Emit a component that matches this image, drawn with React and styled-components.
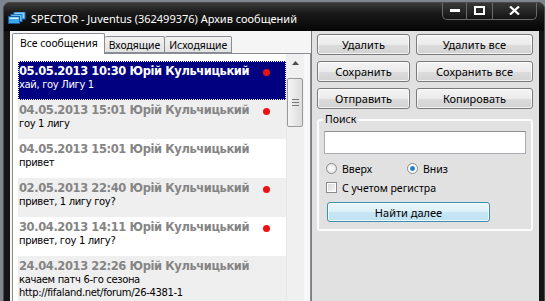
import React from "react";
import styled, { createGlobalStyle } from "styled-components";

const Global = createGlobalStyle`
  html, body { margin: 0; padding: 0; background: #7d858e; }
  body { width: 545px; height: 301px; overflow: hidden; }
`;

const Window = styled.div`
  margin: 2px 0 0 3px;
  width: 542px;
  height: 299px;
  background: #151515;
  border-radius: 7px 7px 0 0;
  border: 1px solid #4a4a4a;
  border-bottom: none;
  box-sizing: border-box;
  display: flex;
  flex-direction: column;
  overflow: hidden;
`;

const TitleBar = styled.div`
  height: 28px;
  flex: none;
  display: flex;
  align-items: flex-start;
  background: linear-gradient(#3c3c3c 0%, #1a1a1a 35%, #050505 100%);
`;

const AppIcon = styled.svg`
  margin: 9px 0 0 4px;
  flex: none;
`;

const Title = styled.div`
  margin: 9px 0 0 5px;
  font-family: "Noto Sans", sans-serif;
  font-size: 11px;
  line-height: 14px;
  color: #ffffff;
  white-space: nowrap;
`;

const Controls = styled.div`
  margin-left: auto;
  margin-right: 7px;
  margin-top: -1px;
  display: flex;
  border: 1px solid #6a6a6a;
  border-top: none;
  border-radius: 0 0 5px 5px;
  overflow: hidden;
  background: linear-gradient(#3a3a3a, #141414);
`;

const CtlButton = styled.div`
  width: ${(p) => p.$w}px;
  height: 17px;
  display: flex;
  align-items: center;
  justify-content: center;
  border-left: ${(p) => (p.$first ? "none" : "1px solid #6a6a6a")};
`;

const Client = styled.div`
  flex: 1;
  display: flex;
  margin: 0 5px 0 6px;
  background: #f5f5f5;
  min-height: 0;
`;

const LeftPane = styled.div`
  width: 301px;
  flex: none;
  display: flex;
  flex-direction: column;
  padding: 2px 0 0 2px;
  box-sizing: border-box;
`;

const TabRow = styled.div`
  display: flex;
  align-items: flex-end;
  height: 20px;
  flex: none;
  position: relative;
  z-index: 1;
`;

const Tab = styled.div`
  font-family: "Noto Sans", sans-serif;
  font-size: 10.4px;
  color: #000;
  box-sizing: border-box;
  height: ${(p) => (p.$active ? "21px" : "17px")};
  margin-bottom: ${(p) => (p.$active ? "-1px" : "0")};
  padding: ${(p) => (p.$active ? "2px 6px 0 7px" : "1px 4px 0 4px")};
  border: 1px solid #898c95;
  border-bottom: ${(p) => (p.$active ? "none" : "1px solid #898c95")};
  border-left: ${(p) => (p.$first || p.$active ? "1px solid #898c95" : "none")};
  border-radius: 2px 2px 0 0;
  background: ${(p) => (p.$active ? "#ffffff" : "linear-gradient(#f2f2f2, #e3e3e3)")};
  white-space: nowrap;
`;

const Page = styled.div`
  flex: 1;
  display: flex;
  border: 1px solid #898c95;
  border-bottom: none;
  background: #f7f7f7;
  min-height: 0;
  padding-right: 6px;
`;

const ListBox = styled.div`
  flex: 1;
  display: flex;
  background: #ffffff;
  min-height: 0;
`;

const Items = styled.div`
  flex: 1;
  padding: 7px 0 0 5px;
  overflow: hidden;
`;

const Item = styled.div`
  padding: 4px 16px 9px 1px;
  background: ${(p) => (p.$selected ? "#000080" : p.$alt ? "#efefef" : "#ffffff")};
  outline: ${(p) => (p.$selected ? "1px dotted #ffffff" : "none")};
  outline-offset: -1px;
  display: grid;
  grid-template-columns: 1fr 7px;
  column-gap: 2px;
`;

const Header = styled.div`
  font-family: "DejaVu Sans", sans-serif;
  font-weight: bold;
  font-size: 11.5px;
  letter-spacing: -0.4px;
  line-height: 13px;
  color: ${(p) => (p.$selected ? "#ffffff" : "#858585")};
  white-space: nowrap;
`;

const Dot = styled.div`
  width: 7px;
  height: 7px;
  border-radius: 50%;
  background: ${(p) => (p.$on ? "#ee1111" : "transparent")};
  margin-top: 4px;
`;

const Body = styled.div`
  grid-column: 1 / span 2;
  font-family: "DejaVu Sans", sans-serif;
  font-size: 10px;
  letter-spacing: -0.35px;
  line-height: 13px;
  color: ${(p) => (p.$selected ? "#ffffff" : "#000000")};
  white-space: pre-line;
`;

const Scrollbar = styled.div`
  width: 17px;
  flex: none;
  background: #f0f0f0;
  display: flex;
  flex-direction: column;
  align-items: stretch;
  border-left: 1px solid #e8e8e8;
`;

const ScrollArrow = styled.div`
  height: 17px;
  display: flex;
  align-items: center;
  justify-content: center;
`;

const Thumb = styled.div`
  height: 47px;
  margin: 7px 1px 0 0;
  border: 1px solid #9a9a9a;
  border-radius: 2px;
  background: linear-gradient(90deg, #f4f4f4, #dcdcdc);
  display: flex;
  align-items: center;
  justify-content: center;
`;

const RightPane = styled.div`
  flex: 1;
  background: #e1e1e1;
  border-left: 1px solid #7d7d7d;
  padding: 3px 5px 0 5px;
  display: flex;
  flex-direction: column;
`;

const ButtonGrid = styled.div`
  display: grid;
  grid-template-columns: 93px 117px;
  grid-auto-rows: 21px;
  column-gap: 6px;
  row-gap: 6px;
`;

const Button = styled.div`
  box-sizing: border-box;
  display: flex;
  align-items: center;
  justify-content: center;
  font-family: "Noto Sans", sans-serif;
  font-size: 11px;
  color: #000;
  border: 1px solid ${(p) => (p.$default ? "#3c8fb0" : "#7a7a7a")};
  border-radius: 3px;
  background: ${(p) =>
    p.$default
      ? "linear-gradient(#eaf6fb 0%, #dcf0f8 50%, #c6e6f4 51%, #bfe2f2 100%)"
      : "linear-gradient(#f4f4f4 0%, #ebebeb 50%, #dcdcdc 51%, #d2d2d2 100%)"};
  box-shadow: inset 0 0 0 1px rgba(255, 255, 255, 0.7);
  height: ${(p) => (p.$h ? p.$h + "px" : "auto")};
  width: ${(p) => (p.$w ? p.$w + "px" : "auto")};
`;

const Group = styled.div`
  margin-top: 10px;
  width: 216px;
  box-sizing: border-box;
  border: 2px solid #fbfbfb;
  border-radius: 3px;
  padding: 10px 5px 7px 5px;
  position: relative;
`;

const Legend = styled.div`
  position: absolute;
  top: -8px;
  left: 4px;
  padding: 0 2px;
  background: #e1e1e1;
  font-family: "Noto Sans", sans-serif;
  font-size: 10.5px;
  line-height: 13px;
  color: #000;
`;

const SearchInput = styled.div`
  height: 23px;
  box-sizing: border-box;
  background: #fff;
  border: 1px solid #abadb3;
  border-top-color: #8e8f8f;
`;

const OptionRow = styled.div`
  display: flex;
  align-items: center;
  margin-top: ${(p) => p.$mt}px;
  padding-left: 2px;
  height: 13px;
`;

const Option = styled.label`
  display: flex;
  align-items: center;
  gap: 5px;
  font-family: "Noto Sans", sans-serif;
  font-size: 10.5px;
  color: #000;
  width: ${(p) => (p.$w ? p.$w + "px" : "auto")};
`;

const Radio = styled.span`
  width: 9px;
  height: 9px;
  border-radius: 50%;
  border: 1px solid #8a8a8a;
  background: radial-gradient(circle, ${(p) => (p.$on ? "#1f6fbf 0, #2f8ad6 2px, #ffffff 3px" : "#ffffff 0, #e6e6e6 5px")});
  flex: none;
`;

const Check = styled.span`
  width: 9px;
  height: 9px;
  border: 1px solid #8a8a8a;
  background: linear-gradient(135deg, #d8d8d8, #f8f8f8);
  box-shadow: inset 0 0 0 1px #ffffff;
  flex: none;
`;

const FindRow = styled.div`
  margin-top: 8px;
  padding-left: 3px;
`;

const items = [
  { h: "05.05.2013 10:30 Юрій Кульчицький", b: "хай, гоу Лигу 1", dot: true, sel: true },
  { h: "04.05.2013 15:01 Юрій Кульчицький", b: "гоу 1 лигу", dot: true },
  { h: "04.05.2013 15:01 Юрій Кульчицький", b: "привет", dot: false },
  { h: "02.05.2013 22:40 Юрій Кульчицький", b: "привет, 1 лигу гоу?", dot: true },
  { h: "30.04.2013 14:11 Юрій Кульчицький", b: "привет, гоу 1 лигу?", dot: true },
  {
    h: "24.04.2013 22:26 Юрій Кульчицький",
    b: "качаем патч 6-го сезона\nhttp://fifaland.net/forum/26-4381-1",
    dot: false,
  },
];

export default function App() {
  return (
    <>
      <Global />
      <Window>
        <TitleBar>
          <AppIcon width="18" height="12" viewBox="0 0 18 12">
            <rect x="6" y="0" width="11" height="7" fill="#8fd0f5" stroke="#1a78c2" strokeWidth="1" />
            <rect x="3" y="2.5" width="11" height="7" fill="#6cc0f0" stroke="#1a78c2" strokeWidth="1" />
            <rect x="0.5" y="4.5" width="11" height="7" fill="#3fa6e8" stroke="#0f5ea6" strokeWidth="1" />
            <rect x="1.5" y="5.5" width="9" height="1.5" fill="#d8f0ff" />
          </AppIcon>
          <Title>SPECTOR - Juventus (362499376) Архив сообщений</Title>
          <Controls>
            <CtlButton $w={23} $first>
              <svg width="10" height="4" viewBox="0 0 10 4">
                <rect x="0" y="0" width="10" height="3" fill="#fff" />
              </svg>
            </CtlButton>
            <CtlButton $w={25}>
              <svg width="11" height="9" viewBox="0 0 11 9">
                <rect x="1" y="1" width="9" height="7" fill="none" stroke="#fff" strokeWidth="2" />
              </svg>
            </CtlButton>
            <CtlButton $w={43}>
              <svg width="11" height="9" viewBox="0 0 11 9">
                <path d="M1 0.5 L10 8.5 M10 0.5 L1 8.5" stroke="#fff" strokeWidth="2.2" />
              </svg>
            </CtlButton>
          </Controls>
        </TitleBar>
        <Client>
          <LeftPane>
            <TabRow>
              <Tab $active $first>Все сообщения</Tab>
              <Tab>Входящие</Tab>
              <Tab>Исходящие</Tab>
            </TabRow>
            <Page>
              <ListBox>
                <Items>
                  {items.map((it, i) => (
                    <Item key={i} $selected={it.sel} $alt={i % 2 === 1}>
                      <Header $selected={it.sel}>{it.h}</Header>
                      <Dot $on={it.dot} />
                      <Body $selected={it.sel}>{it.b}</Body>
                    </Item>
                  ))}
                </Items>
                <Scrollbar>
                  <ScrollArrow>
                    <svg width="7" height="4" viewBox="0 0 7 4">
                      <path d="M0 4 L3.5 0 L7 4 Z" fill="#4d4d4d" />
                    </svg>
                  </ScrollArrow>
                  <Thumb>
                    <svg width="7" height="7" viewBox="0 0 7 7">
                      <path d="M0 0.5 H7 M0 3.5 H7 M0 6.5 H7" stroke="#777" strokeWidth="1" />
                    </svg>
                  </Thumb>
                </Scrollbar>
              </ListBox>
            </Page>
          </LeftPane>
          <RightPane>
            <ButtonGrid>
              <Button>Удалить</Button>
              <Button>Удалить все</Button>
              <Button>Сохранить</Button>
              <Button>Сохранить все</Button>
              <Button>Отправить</Button>
              <Button>Копировать</Button>
            </ButtonGrid>
            <Group>
              <Legend>Поиск</Legend>
              <SearchInput />
              <OptionRow $mt={8}>
                <Option $w={81}>
                  <Radio />
                  Вверх
                </Option>
                <Option>
                  <Radio $on />
                  Вниз
                </Option>
              </OptionRow>
              <OptionRow $mt={6}>
                <Option>
                  <Check />С учетом регистра
                </Option>
              </OptionRow>
              <FindRow>
                <Button $default $w={163} $h={20}>
                  Найти далее
                </Button>
              </FindRow>
            </Group>
          </RightPane>
        </Client>
      </Window>
    </>
  );
}
